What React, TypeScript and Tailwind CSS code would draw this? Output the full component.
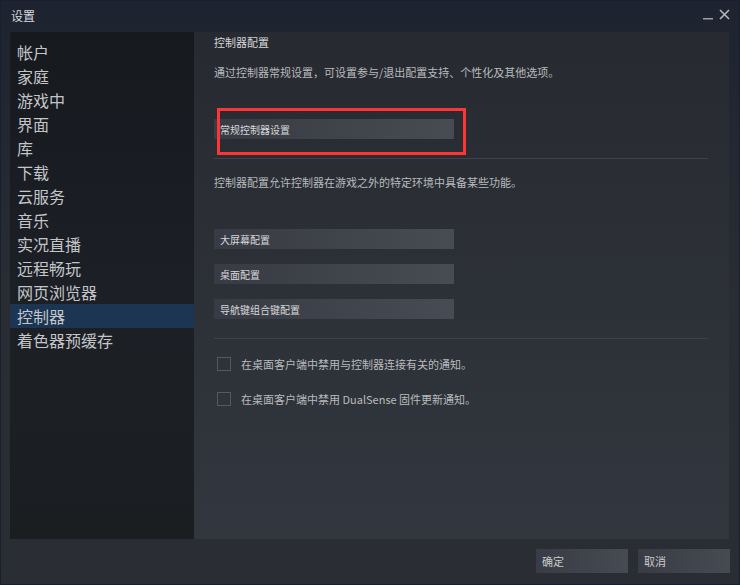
import React from "react";

const font = { fontFamily: '"Noto Sans CJK SC", "Noto Sans", sans-serif' };

const sections = [
  "帐户",
  "家庭",
  "游戏中",
  "界面",
  "库",
  "下载",
  "云服务",
  "音乐",
  "实况直播",
  "远程畅玩",
  "网页浏览器",
  "控制器",
  "着色器预缓存",
];

function PanelButton({ label, className = "" }: { label: string; className?: string }) {
  return (
    <div
      className={`w-[240px] h-[20px] flex items-center pl-[6px] text-[10px] text-[#d6d8da] bg-gradient-to-r from-[#383b43] to-[#474b54] ${className}`}
    >
      {label}
    </div>
  );
}

function Checkbox({ label, className = "" }: { label: string; className?: string }) {
  return (
    <label className={`flex items-center h-[16px] ${className}`}>
      <span className="ml-[3px] w-[14px] h-[14px] border border-[#55585e]" />
      <span className="ml-[10px] text-[11px] leading-[16px] text-[#b8bbbe]">{label}</span>
    </label>
  );
}

export default function App() {
  const active = "控制器";

  return (
    <div
      className="w-[740px] h-[585px] border border-[#17202c] bg-gradient-to-b from-[#1d2330] via-[#292c33] to-[#2a2d33] flex flex-col overflow-hidden"
      style={font}
    >
      {/* Title bar */}
      <div className="h-[31px] flex items-center justify-between pl-[10px] pr-[9px]">
        <span className="text-[12px] text-[#d8dadc] mt-[-2px]">设置</span>
        <div className="flex items-center gap-[6px] mt-[-4px]">
          <svg width="10" height="12" viewBox="0 0 10 12">
            <rect x="0" y="9" width="10" height="1.5" fill="#9a9ea4" />
          </svg>
          <svg width="11" height="11" viewBox="0 0 11 11">
            <path d="M1 1 L10 10 M10 1 L1 10" stroke="#b4b7bb" strokeWidth="1.6" />
          </svg>
        </div>
      </div>

      {/* Body */}
      <div className="flex h-[507px] pl-[9px] pr-[10px]">
        {/* Sidebar */}
        <div className="w-[184px] bg-gradient-to-b from-[#16191e] via-[#1c1f25] to-[#1b1e21] pt-[8px]">
          {sections.map((s) => (
            <div
              key={s}
              className={`h-[24px] flex items-center pl-[7px] text-[16px] text-[#c3c6c9] ${
                s === active ? "bg-[#1b3552]" : ""
              }`}
            >
              {s}
            </div>
          ))}
        </div>

        {/* Controller settings */}
        <div className="relative flex-1 bg-gradient-to-b from-[#272a30] to-[#32363e] pl-[20px] pr-[21px] pt-[2px]">
          <div className="text-[11px] leading-[16px] text-[#d6d8da]">控制器配置</div>
          <div className="mt-[14px] text-[11px] leading-[16px] text-[#b8bbbe]">
            通过控制器常规设置，可设置参与/退出配置支持、个性化及其他选项。
          </div>
          <PanelButton label="常规控制器设置" className="mt-[39px]" />
          <div className="mt-[19px] h-px bg-[#3e424a]" />

          <div className="mt-[15px] text-[11px] leading-[16px] text-[#b8bbbe]">
            控制器配置允许控制器在游戏之外的特定环境中具备某些功能。
          </div>
          <PanelButton label="大屏幕配置" className="mt-[39px]" />
          <PanelButton label="桌面配置" className="mt-[15px]" />
          <PanelButton label="导航键组合键配置" className="mt-[15px]" />
          <div className="mt-[19px] h-px bg-[#3e424a]" />

          <Checkbox label="在桌面客户端中禁用与控制器连接有关的通知。" className="mt-[17px]" />
          <Checkbox label="在桌面客户端中禁用 DualSense 固件更新通知。" className="mt-[19px]" />

          {/* highlight box */}
          <div className="absolute left-[23px] top-[76px] w-[249px] h-[47px] border-[3px] border-[#ff3434]" />
        </div>
      </div>

      {/* Footer */}
      <div className="flex-1 flex justify-end items-start gap-[10px] pt-[10px] pr-[9px]">
        <div className="w-[92px] h-[24px] flex items-center pl-[6px] text-[11px] text-[#c8cacd] bg-gradient-to-r from-[#393c44] to-[#464a53]">
          确定
        </div>
        <div className="w-[92px] h-[24px] flex items-center pl-[6px] text-[11px] text-[#c8cacd] bg-gradient-to-r from-[#393c44] to-[#464a53]">
          取消
        </div>
      </div>
    </div>
  );
}
